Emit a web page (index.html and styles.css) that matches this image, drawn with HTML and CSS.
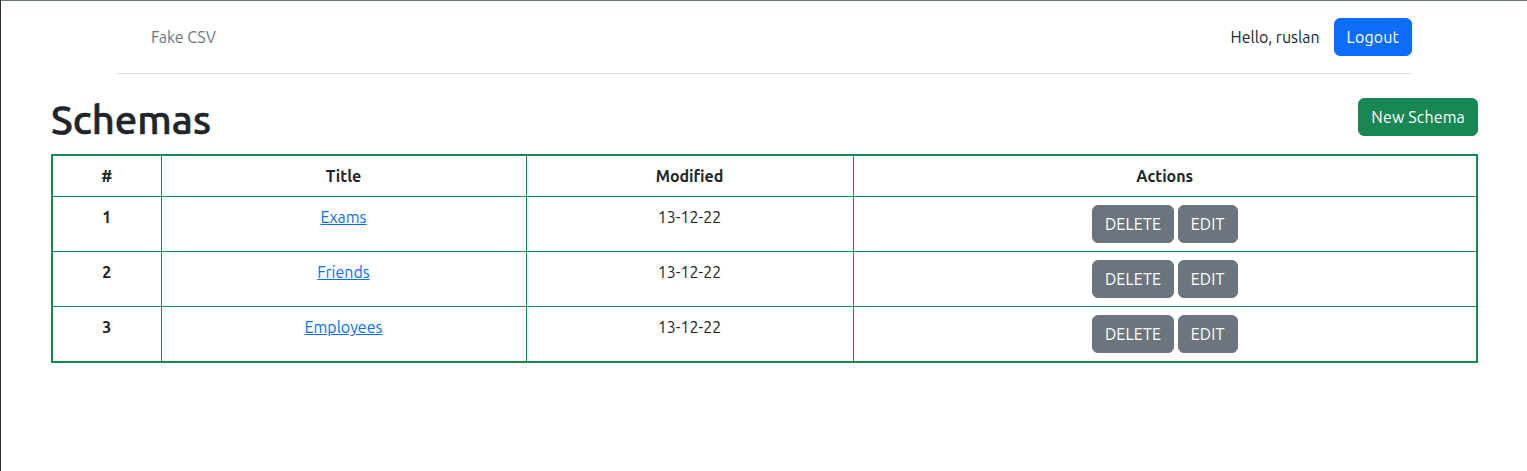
FILE: index.html
```html
<!DOCTYPE html>
<html lang="en">
<head>
<meta charset="utf-8">
<title>Schemas</title>
<link rel="stylesheet" href="styles.css">
</head>
<body>
<div class="frame">
  <div class="container">
    <nav class="navbar">
      <a class="brand" href="#">Fake CSV</a>
      <div class="user">
        <span class="hello">Hello, ruslan</span>
        <a class="btn btn-primary" href="#">Logout</a>
      </div>
    </nav>
  </div>
  <main class="main">
    <div class="page-head">
      <h1 class="title">Schemas</h1>
      <a class="btn btn-success" href="#">New Schema</a>
    </div>
    <table class="schemas">
      <colgroup>
        <col class="c-num">
        <col class="c-title">
        <col class="c-mod">
        <col class="c-act">
      </colgroup>
      <thead>
        <tr><th>#</th><th>Title</th><th>Modified</th><th>Actions</th></tr>
      </thead>
      <tbody>
        <tr>
          <th>1</th>
          <td><a class="link" href="#">Exams</a></td>
          <td>13-12-22</td>
          <td><a class="btn btn-secondary" href="#">DELETE</a> <a class="btn btn-secondary" href="#">EDIT</a></td>
        </tr>
        <tr>
          <th>2</th>
          <td><a class="link" href="#">Friends</a></td>
          <td>13-12-22</td>
          <td><a class="btn btn-secondary" href="#">DELETE</a> <a class="btn btn-secondary" href="#">EDIT</a></td>
        </tr>
        <tr>
          <th>3</th>
          <td><a class="link" href="#">Employees</a></td>
          <td>13-12-22</td>
          <td><a class="btn btn-secondary" href="#">DELETE</a> <a class="btn btn-secondary" href="#">EDIT</a></td>
        </tr>
      </tbody>
    </table>
  </main>
</div>
</body>
</html>
```
FILE: styles.css
```css
* { box-sizing: border-box; }
html, body { margin: 0; padding: 0; height: 100%; }
body {
  font-family: "Ubuntu", "Open Sans", "Noto Sans", sans-serif;
  font-size: 16px;
  line-height: 24px;
  color: #212529;
  background: #fff;
}
.frame {
  min-height: 100%;
  border-top: 1px solid #65737a;
  border-left: 1px solid #2b2b2b;
}
.container {
  width: 1320px;
  margin: 0 auto;
  padding: 0 12px;
}
.navbar {
  display: flex;
  justify-content: space-between;
  align-items: center;
  padding: 17px 0 17px;
  border-bottom: 1px solid #dee2e6;
}
.brand {
  padding-left: 35px;
  color: #6c757d;
  text-decoration: none;
}
.user {
  display: flex;
  align-items: center;
  gap: 14px;
}
.hello { color: #212529; }
.btn {
  display: inline-block;
  padding: 6px 12px;
  font-size: 16px;
  line-height: 24px;
  letter-spacing: 0.15px;
  border-radius: 6px;
  color: #fff;
  text-decoration: none;
  border: 1px solid transparent;
}
.btn-primary { background: #0d6efd; border-color: #0d6efd; }
.btn-success { background: #198754; border-color: #198754; }
.btn-secondary { background: #6c757d; border-color: #6c757d; }
.main {
  padding: 0 49px 0 50px;
}
.page-head {
  display: flex;
  justify-content: space-between;
  align-items: flex-start;
  padding-top: 22px;
  margin-bottom: 10px;
}
.title {
  margin: 0;
  font-size: 40px;
  line-height: 48px;
  font-weight: 500;
  -webkit-text-stroke: 0.6px #212529;
}
.page-head .btn { margin-top: 2px; }
.schemas {
  width: 100%;
  border-collapse: collapse;
  border: 2px solid #198754;
  table-layout: fixed;
}
.c-num { width: 109px; }
.c-title { width: 365px; }
.c-mod { width: 327px; }
.schemas th, .schemas td {
  border: 1px solid #198754;
  padding: 8px;
  text-align: center;
  vertical-align: top;
}
.schemas th { font-weight: 700; }
.link { color: #0d6efd; text-decoration: underline; }
```
